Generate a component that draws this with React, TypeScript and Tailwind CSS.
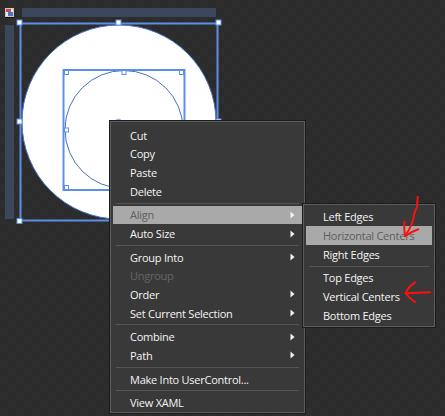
import { FC } from 'react';

type Item = { label: string; sub?: boolean; disabled?: boolean; active?: boolean } | 'sep';

const mainMenu: Item[] = [
  { label: 'Cut' },
  { label: 'Copy' },
  { label: 'Paste' },
  { label: 'Delete' },
  'sep',
  { label: 'Align', sub: true, active: true },
  { label: 'Auto Size', sub: true },
  'sep',
  { label: 'Group Into', sub: true },
  { label: 'Ungroup', disabled: true },
  { label: 'Order', sub: true },
  { label: 'Set Current Selection', sub: true },
  'sep',
  { label: 'Combine', sub: true },
  { label: 'Path', sub: true },
  'sep',
  { label: 'Make Into UserControl...' },
  'sep',
  { label: 'View XAML' },
];

const alignMenu: Item[] = [
  { label: 'Left Edges' },
  { label: 'Horizontal Centers', active: true },
  { label: 'Right Edges' },
  'sep',
  { label: 'Top Edges' },
  { label: 'Vertical Centers' },
  { label: 'Bottom Edges' },
];

const Arrow: FC = () => (
  <svg width="5" height="8" viewBox="0 0 5 8" className="shrink-0">
    <polygon points="0.5,0.5 4.5,4 0.5,7.5" fill="#f2f2f2" />
  </svg>
);

const MenuList: FC<{ items: Item[]; sepClass: string }> = ({ items, sepClass }) => (
  <>
    {items.map((it, i) =>
      it === 'sep' ? (
        <div key={i} className={`mx-[5px] h-px bg-[#555555] ${sepClass}`} />
      ) : (
        <div
          key={i}
          className={
            'mx-[2px] flex h-[18.7px] items-center justify-between pl-[17px] pr-[7px] ' +
            (it.active ? 'bg-[#a9a9a9] text-[#5e5e5e]' : it.disabled ? 'text-[#666666]' : 'text-[#f4f4f4]')
          }
        >
          <span>{it.label}</span>
          {it.sub && <Arrow />}
        </div>
      )
    )}
  </>
);

const Handle: FC<{ x: number; y: number; s?: number }> = ({ x, y, s = 5 }) => (
  <rect x={x - s / 2} y={y - s / 2} width={s} height={s} fill="#ffffff" stroke="#5b8fe8" strokeWidth="1" />
);

export default function App() {
  return (
    <div
      className="relative h-[416px] w-[445px] overflow-hidden bg-[#2c2c2c] bg-[conic-gradient(#2e2e2e_25%,#2b2b2b_0_50%,#2e2e2e_0_75%,#2b2b2b_0)] bg-size-[16px_16px] text-[11px] leading-none tracking-[-0.25px]"
      style={{ fontFamily: '"Open Sans", "Noto Sans", sans-serif' }}
    >
      {/* artboard icon + rulers */}
      <div className="absolute left-[5px] top-[8px] flex h-[10px] w-[9px] flex-col">
        <div className="relative h-[9px] w-[9px] border border-[#c8c8c8] bg-[#e8e8e8]">
          <div className="absolute left-0 top-0 h-[3px] w-[5px] bg-[#d04848]" />
          <div className="absolute bottom-0 right-0 h-[4px] w-[5px] bg-[#4a78c8]" />
        </div>
        <div className="h-px w-[9px] bg-[#111111]" />
      </div>
      <div className="absolute left-[22px] top-[8px] h-[9px] w-[194px] bg-[#3b475c]" />
      <div className="absolute left-[5px] top-[25px] h-[194px] w-[9px] bg-[#3b475c]" />

      {/* design surface */}
      <svg className="absolute left-0 top-0" width="445" height="416">
        <circle cx="119" cy="122" r="97" fill="#ffffff" stroke="#4a72c8" strokeWidth="1" />
        <rect x="20.5" y="23.5" width="197" height="197" fill="none" stroke="#5b8fe8" strokeWidth="2" />
        <circle cx="124" cy="129.5" r="59" fill="#ffffff" stroke="#4a6fc0" strokeWidth="1" />
        <rect x="63.5" y="70" width="121" height="120" fill="none" stroke="#5b8fe8" strokeWidth="2" />
        <circle cx="118.5" cy="121.5" r="2.5" fill="#ffffff" stroke="#7a9ee0" strokeWidth="1" />
        <Handle x={19.5} y={22.5} />
        <Handle x={118.5} y={22.5} />
        <Handle x={218.5} y={22.5} />
        <Handle x={19.5} y={121.5} />
        <Handle x={218.5} y={121.5} />
        <Handle x={19.5} y={221} />
        <Handle x={66.5} y={72.5} s={4} />
        <Handle x={124} y={72.5} s={4} />
        <Handle x={181.5} y={72.5} s={4} />
        <Handle x={66.5} y={130} s={4} />
        <Handle x={66.5} y={187.5} s={4} />
      </svg>

      {/* context menu */}
      <div className="absolute left-[110px] top-[121px] flex h-[292px] w-[195px] flex-col border border-[#5c5c5c] bg-[#393939] pt-[4px] shadow-[0_0_0_1px_#1c1c1c]">
        <MenuList items={mainMenu} sepClass="my-[2px]" />
      </div>

      {/* align submenu */}
      <div className="absolute left-[303px] top-[204px] flex h-[123px] w-[132px] flex-col border border-[#5c5c5c] bg-[#393939] pt-[2.5px] shadow-[0_0_0_1px_#1c1c1c]">
        <MenuList items={alignMenu} sepClass="my-[2px]" />
      </div>

      {/* red annotation arrows */}
      <svg className="pointer-events-none absolute left-0 top-0" width="445" height="416">
        <g fill="none" stroke="#ff1010" strokeWidth="2" strokeLinecap="round" strokeLinejoin="round">
          <path d="M417.7 196.7 L417 206.7 Q415 211 414 215 L412.5 222 Q410 229 405 236" />
          <path d="M404.3 221.7 Q404 229 405 236 Q411 232 418.3 229.3" />
          <path d="M430 292.3 L405.7 293.3" />
          <path d="M415 282.3 Q408 287 405.7 293.3 Q409 298 415 302.3" />
        </g>
      </svg>
    </div>
  );
}
